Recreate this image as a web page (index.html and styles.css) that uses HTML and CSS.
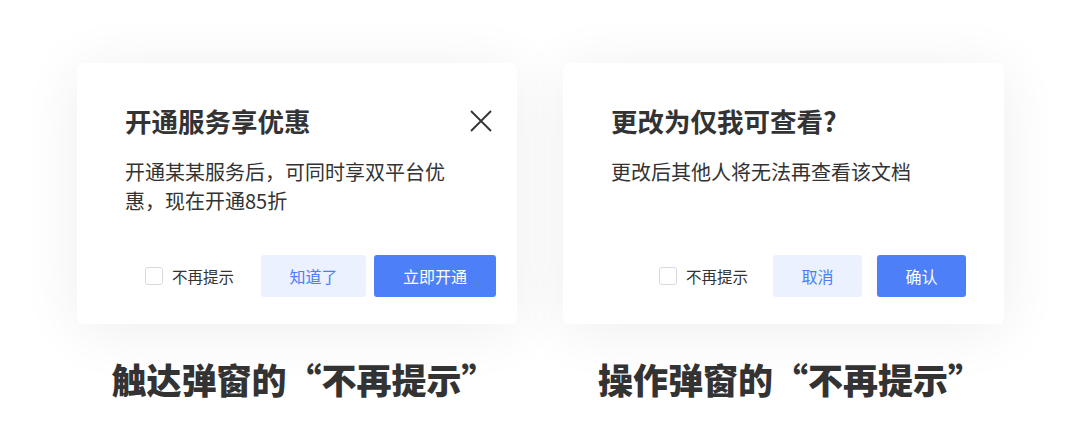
FILE: index.html
```html
<!DOCTYPE html>
<html lang="zh-CN">
<head>
    <meta charset="UTF-8">
    <meta name="viewport" content="width=device-width, initial-scale=1.0">
    <title>不再提示</title>
    <link rel="stylesheet" href="styles.css">
</head>
<body>
    <div class="page">
        <div class="panel">
            <div class="card card-reach">
                <div class="card-head">
                    <h2 class="card-title">开通服务享优惠</h2>
                    <svg class="close" width="22" height="22" viewBox="0 0 22 22">
                        <path d="M1 1L21 21M21 1L1 21" stroke="#333" stroke-width="1.8" fill="none"/>
                    </svg>
                </div>
                <p class="card-text">开通某某服务后，可同时享双平台优惠，现在开通85折</p>
                <div class="card-foot">
                    <label class="check"><span class="box"></span>不再提示</label>
                    <button class="btn btn-light btn-know">知道了</button>
                    <button class="btn btn-primary btn-open">立即开通</button>
                </div>
            </div>
            <div class="caption">触达弹窗的“不再提示”</div>
        </div>

        <div class="panel">
            <div class="card card-action">
                <div class="card-head">
                    <h2 class="card-title">更改为仅我可查看?</h2>
                </div>
                <p class="card-text">更改后其他人将无法再查看该文档</p>
                <div class="card-foot">
                    <label class="check"><span class="box"></span>不再提示</label>
                    <button class="btn btn-light btn-small">取消</button>
                    <button class="btn btn-primary btn-small">确认</button>
                </div>
            </div>
            <div class="caption">操作弹窗的“不再提示”</div>
        </div>
    </div>
</body>
</html>
```

FILE: styles.css
```css
body {
    margin: 0;
    background-color: #fff;
    font-family: "Noto Sans CJK SC", "Noto Sans", sans-serif;
    color: #333;
}
.page {
    display: grid;
    grid-template-columns: 440px 441px;
    column-gap: 46px;
    padding: 63px 76px 0 77px;
}
.panel {
    display: flex;
    flex-direction: column;
}
.card {
    height: 261px;
    box-sizing: border-box;
    display: flex;
    flex-direction: column;
    background-color: #fff;
    border-radius: 6px;
    box-shadow: 0 6px 60px rgba(0, 0, 0, 0.07);
}
.card-reach {
    padding: 40px 21px 27px 48px;
}
.card-action {
    padding: 40px 38px 27px 48px;
}
.card-head {
    display: flex;
    align-items: center;
    justify-content: space-between;
    height: 36px;
}
.card-title {
    margin: 0;
    font-size: 26.5px;
    line-height: 36px;
    font-weight: 700;
    color: #333;
}
.close {
    margin-right: 4px;
}
.card-text {
    margin: 18px 0 0;
    max-width: 330px;
    font-size: 20px;
    line-height: 29px;
    color: #333;
}
.card-foot {
    margin-top: auto;
    display: flex;
    align-items: center;
    justify-content: flex-end;
}
.check {
    display: flex;
    align-items: center;
    gap: 9px;
    font-size: 15.5px;
    color: #333;
}
.card-reach .check {
    margin-right: 27px;
}
.card-action .check {
    margin-right: 25px;
}
.box {
    width: 16px;
    height: 16px;
    border: 1px solid #d9d9d9;
    border-radius: 3px;
    background-color: #fff;
}
.btn {
    height: 42px;
    border: none;
    border-radius: 3px;
    font-family: inherit;
    font-size: 16px;
    padding: 0;
}
.btn-light {
    background-color: #ebf1fe;
    color: #4a7ef4;
}
.btn-primary {
    background-color: #4d80f8;
    color: #fff;
}
.btn-know {
    width: 105px;
}
.btn-open {
    width: 122px;
    margin-left: 8px;
}
.btn-small {
    width: 89px;
}
.btn-small + .btn-small {
    margin-left: 15px;
}
.caption {
    margin-top: 31px;
    padding-left: 14px;
    text-align: center;
    font-size: 35px;
    line-height: 48px;
    font-weight: 900;
    color: #333;
}
```
